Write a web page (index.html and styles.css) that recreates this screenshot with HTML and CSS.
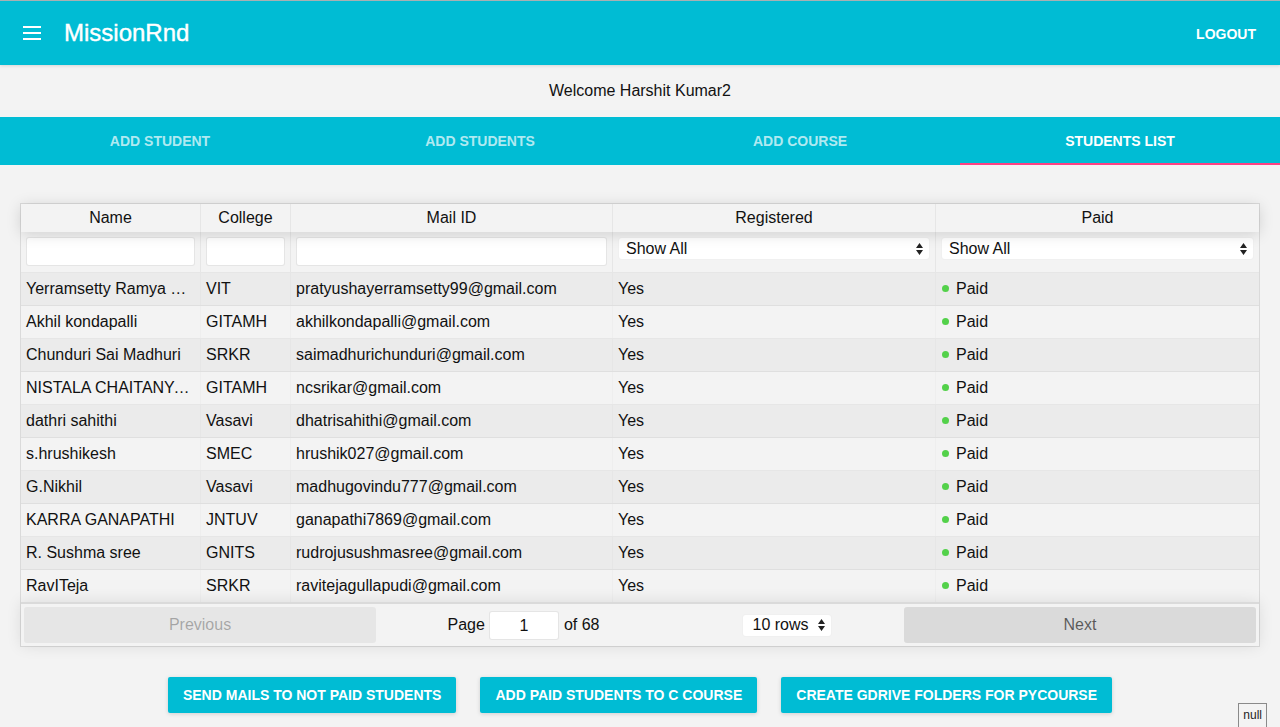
FILE: index.html
```html
<!DOCTYPE html>
<html>
<head>
<meta charset="utf-8">
<title>MissionRnd</title>
<link rel="stylesheet" href="styles.css">
</head>
<body>
<header class="appbar">
  <svg class="menu-icon" width="18" height="14" viewBox="0 0 18 14"><rect x="0" y="0" width="18" height="2" fill="#fff"/><rect x="0" y="6" width="18" height="2" fill="#fff"/><rect x="0" y="12" width="18" height="2" fill="#fff"/></svg>
  <div class="brand">MissionRnd</div>
  <div class="spacer"></div>
  <button class="logout">LOGOUT</button>
</header>
<div class="welcome">Welcome Harshit Kumar2</div>
<nav class="tabs">
  <div class="tab">ADD STUDENT</div>
  <div class="tab">ADD STUDENTS</div>
  <div class="tab">ADD COURSE</div>
  <div class="tab active">STUDENTS LIST</div>
</nav>

<main class="content">
  <div class="rtable">
    <div class="thead header-row">
      <div class="tr">
        <div class="th">Name</div>
        <div class="th">College</div>
        <div class="th">Mail ID</div>
        <div class="th">Registered</div>
        <div class="th">Paid</div>
      </div>
    </div>
    <div class="thead filter-row">
      <div class="tr">
        <div class="th"><div class="finput"></div></div>
        <div class="th"><div class="finput"></div></div>
        <div class="th"><div class="finput"></div></div>
        <div class="th"><div class="fselect"><span>Show All</span><svg width="7" height="12" viewBox="0 0 7 12"><path d="M3.5 0 L7 5 L0 5 Z M0 7 L7 7 L3.5 12 Z" fill="#222"/></svg></div></div>
        <div class="th"><div class="fselect"><span>Show All</span><svg width="7" height="12" viewBox="0 0 7 12"><path d="M3.5 0 L7 5 L0 5 Z M0 7 L7 7 L3.5 12 Z" fill="#222"/></svg></div></div>
      </div>
    </div>
    <div class="tbody">
      <div class="tr odd"><div class="td">Yerramsetty Ramya Pratyusha</div><div class="td">VIT</div><div class="td">pratyushayerramsetty99@gmail.com</div><div class="td">Yes</div><div class="td"><span class="dot"></span>Paid</div></div>
      <div class="tr"><div class="td">Akhil kondapalli</div><div class="td">GITAMH</div><div class="td">akhilkondapalli@gmail.com</div><div class="td">Yes</div><div class="td"><span class="dot"></span>Paid</div></div>
      <div class="tr odd"><div class="td">Chunduri Sai Madhuri</div><div class="td">SRKR</div><div class="td">saimadhurichunduri@gmail.com</div><div class="td">Yes</div><div class="td"><span class="dot"></span>Paid</div></div>
      <div class="tr"><div class="td">NISTALA CHAITANYA SRIKAR</div><div class="td">GITAMH</div><div class="td">ncsrikar@gmail.com</div><div class="td">Yes</div><div class="td"><span class="dot"></span>Paid</div></div>
      <div class="tr odd"><div class="td">dathri sahithi</div><div class="td">Vasavi</div><div class="td">dhatrisahithi@gmail.com</div><div class="td">Yes</div><div class="td"><span class="dot"></span>Paid</div></div>
      <div class="tr"><div class="td">s.hrushikesh</div><div class="td">SMEC</div><div class="td">hrushik027@gmail.com</div><div class="td">Yes</div><div class="td"><span class="dot"></span>Paid</div></div>
      <div class="tr odd"><div class="td">G.Nikhil</div><div class="td">Vasavi</div><div class="td">madhugovindu777@gmail.com</div><div class="td">Yes</div><div class="td"><span class="dot"></span>Paid</div></div>
      <div class="tr"><div class="td">KARRA GANAPATHI</div><div class="td">JNTUV</div><div class="td">ganapathi7869@gmail.com</div><div class="td">Yes</div><div class="td"><span class="dot"></span>Paid</div></div>
      <div class="tr odd"><div class="td">R. Sushma sree</div><div class="td">GNITS</div><div class="td">rudrojusushmasree@gmail.com</div><div class="td">Yes</div><div class="td"><span class="dot"></span>Paid</div></div>
      <div class="tr"><div class="td">RavITeja</div><div class="td">SRKR</div><div class="td">ravitejagullapudi@gmail.com</div><div class="td">Yes</div><div class="td"><span class="dot"></span>Paid</div></div>
    </div>
    <div class="pagination">
      <div class="pbtn-wrap"><div class="pbtn disabled">Previous</div></div>
      <div class="pcenter">
        <div class="pageinfo">Page <div class="pageinput">1</div> of 68</div>
        <div class="pagesize"><span>10 rows</span><svg width="7" height="12" viewBox="0 0 7 12"><path d="M3.5 0 L7 5 L0 5 Z M0 7 L7 7 L3.5 12 Z" fill="#222"/></svg></div>
      </div>
      <div class="pbtn-wrap"><div class="pbtn">Next</div></div>
    </div>
  </div>

  <div class="actions">
    <button class="action">SEND MAILS TO NOT PAID STUDENTS</button>
    <button class="action">ADD PAID STUDENTS TO C COURSE</button>
    <button class="action">CREATE GDRIVE FOLDERS FOR PYCOURSE</button>
  </div>
</main>
<div class="nullbox">null</div>
</body>
</html>
```

FILE: styles.css
```css
html, body {
  margin: 0;
  padding: 0;
  height: 727px;
  overflow: hidden;
}
body {
  background: #f3f3f3;
  font-family: "Liberation Sans", Arial, Helvetica, sans-serif;
  color: #111;
}
.appbar {
  height: 64px;
  border-top: 1px solid #a8b0b2;
  background: #00bcd4;
  display: flex;
  align-items: center;
  padding: 0 24px 0 23px;
  box-shadow: 0 1px 3px rgba(0,0,0,0.12);
  position: relative;
  z-index: 2;
}
.menu-icon { display: block; }
.brand {
  margin-left: 23px;
  font-size: 24px;
  color: #fff;
  letter-spacing: 0;
  margin-top: -1px;
  -webkit-text-stroke: 0.4px #fff;
}
.spacer { flex: 1; }
.logout {
  background: none;
  border: 0;
  color: #fff;
  font-family: inherit;
  font-size: 14px;
  font-weight: bold;
  padding: 0;
  margin-top: 1px;
}
.welcome {
  height: 52px;
  display: flex;
  align-items: center;
  justify-content: center;
  font-size: 16px;
  color: #111;
}
.tabs {
  display: flex;
  height: 48px;
  background: #00bcd4;
}
.tab {
  flex: 1;
  display: flex;
  align-items: center;
  justify-content: center;
  color: rgba(255,255,255,0.7);
  font-size: 14px;
  font-weight: bold;
  box-sizing: border-box;
  border-bottom: 2px solid transparent;
  padding-top: 2px;
}
.tab.active {
  color: #fff;
  border-bottom-color: #ff4081;
}
.content {
  padding: 38px 20px 0 20px;
}
.rtable {
  border: 1px solid rgba(0,0,0,0.1);
  font-size: 16px;
}
.tr {
  display: grid;
  grid-template-columns: 180px 90px 322px 323px 1fr;
}
.th, .td {
  border-right: 1px solid rgba(0,0,0,0.05);
  line-height: 18px;
}
.th:last-child, .td:last-child { border-right: 0; }
.header-row {
  position: relative;
  z-index: 1;
  box-shadow: 0 2px 15px 0 rgba(0,0,0,0.15);
  background: #f3f3f3;
}
.header-row .th {
  padding: 5px;
  text-align: center;
}
.filter-row {
  border-bottom: 1px solid rgba(0,0,0,0.05);
}
.filter-row .th {
  padding: 5px 5px 6px 5px;
}
.finput {
  height: 29px;
  box-sizing: border-box;
  background: #fff;
  border: 1px solid rgba(0,0,0,0.1);
  border-radius: 3px;
}
.fselect {
  height: 23px;
  box-sizing: border-box;
  background: #fff;
  border-radius: 4px;
  border: 1px solid rgba(0,0,0,0.06);
  display: flex;
  align-items: center;
  justify-content: space-between;
  padding: 0 6px 0 7px;
}
.fselect svg, .pagesize svg { display: block; }
.tbody .tr {
  border-bottom: 1px solid rgba(0,0,0,0.05);
}
.tbody .tr.odd { background: rgba(0,0,0,0.03); }
.tbody .tr:last-child { border-bottom: 0; }
.td {
  padding: 7px 5px;
  white-space: nowrap;
  overflow: hidden;
  text-overflow: ellipsis;
  border-right-color: rgba(0,0,0,0.02);
}
.dot {
  display: inline-block;
  width: 7px;
  height: 7px;
  border-radius: 50%;
  background: #53d14a;
  margin: 0 7px 2px 1px;
  vertical-align: middle;
}
.pagination {
  display: flex;
  padding: 3px;
  border-top: 2px solid rgba(0,0,0,0.1);
  box-shadow: 0 0 15px 0 rgba(0,0,0,0.1);
}
.pbtn-wrap { flex: 1; }
.pbtn {
  height: 36px;
  line-height: 36px;
  border-radius: 3px;
  background: rgba(0,0,0,0.1);
  color: rgba(0,0,0,0.6);
  text-align: center;
  font-size: 16px;
}
.pbtn.disabled { opacity: 0.5; }
.pcenter {
  flex: 1.5;
  display: flex;
  align-items: center;
  justify-content: space-around;
}
.pageinfo, .pagesize { margin: 3px 10px; }
.pageinfo {
  display: flex;
  align-items: center;
  white-space: nowrap;
}
.pageinput {
  width: 70px;
  height: 29px;
  box-sizing: border-box;
  margin: 0 5px 0 4px;
  background: #fff;
  border: 1px solid rgba(0,0,0,0.1);
  border-radius: 3px;
  text-align: center;
  line-height: 27px;
}
.pagesize {
  width: 90px;
  height: 23px;
  box-sizing: border-box;
  background: #fff;
  border-radius: 4px;
  border: 1px solid rgba(0,0,0,0.06);
  display: flex;
  align-items: center;
  justify-content: space-between;
  padding: 0 6px 0 9px;
}
.actions {
  display: flex;
  justify-content: center;
  gap: 24px;
  margin-top: 30px;
}
.action {
  height: 36px;
  padding: 0 15px;
  border: 0;
  border-radius: 2px;
  background: #00bcd4;
  color: #fff;
  font-family: inherit;
  font-size: 14px;
  font-weight: bold;
  box-shadow: 0 1px 4px rgba(0,0,0,0.15);
}
.nullbox {
  position: fixed;
  right: 13px;
  bottom: -4px;
  border: 1px solid #8a8a8a;
  background: #f3f3f3;
  font-size: 12px;
  padding: 4px 4px 8px 4px;
  color: #222;
}
```
